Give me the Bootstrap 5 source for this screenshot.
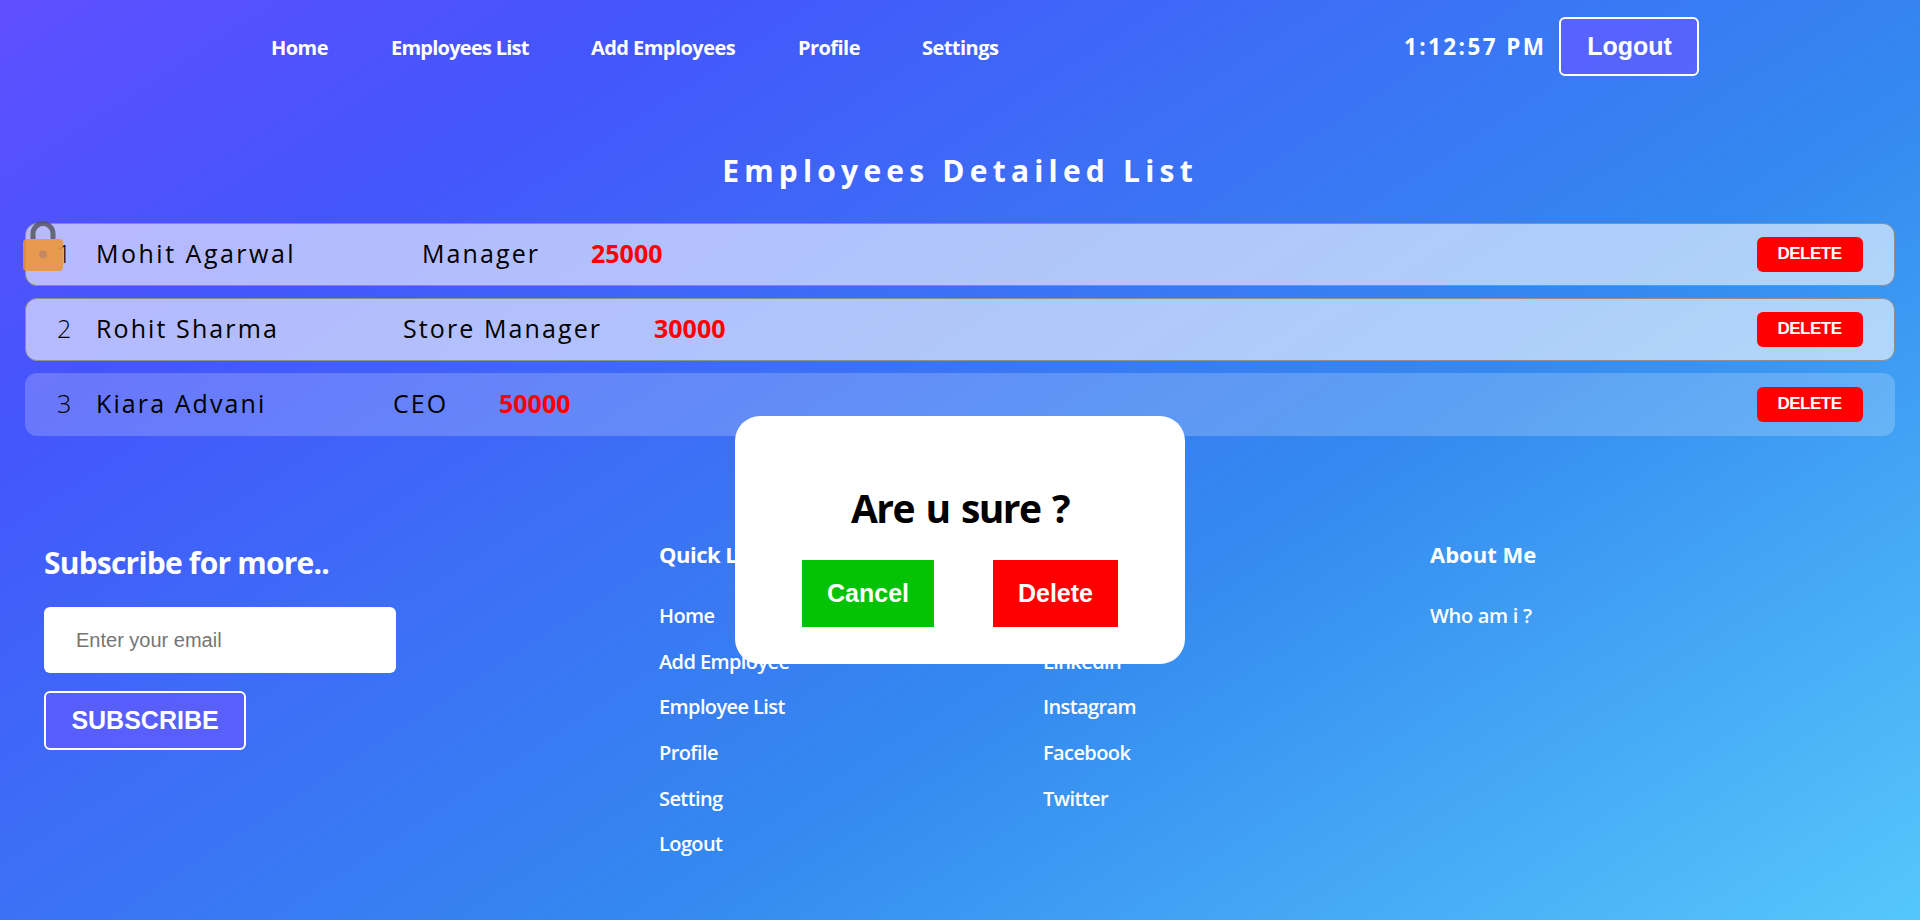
<!DOCTYPE html>
<html lang="en">
<head>
<meta charset="utf-8">
<title>Employees</title>
<link href="https://cdn.jsdelivr.net/npm/bootstrap@5.3.0/dist/css/bootstrap.min.css" rel="stylesheet">
<style>
body{height:920px;overflow:hidden;font-family:"Open Sans","Noto Sans",sans-serif;color:#fff;background:linear-gradient(147deg,#5f4fff 0%,#4455fc 20%,#3489f0 62%,#55c7fb 100%)}
.topbar{height:95px;padding:17px 221px 0 271px}
.topbar .nav-link{padding:0;color:#fff;font-size:20px;font-weight:700;line-height:30px;letter-spacing:-.55px;white-space:nowrap;margin-top:16px}
.topbar .m2{letter-spacing:-.75px}
.m1{width:120px}.m2{width:200px}.m3{width:207px}.m4{width:124px}
.clock{font-size:22.5px;font-weight:700;letter-spacing:2.4px;line-height:30px;margin-top:15px;width:155px;white-space:nowrap}
.btn-main{width:140px;height:59px;border:2px solid #fff;border-radius:6px;background:rgba(100,90,255,.7);color:#fff;font:700 25px/1 "Liberation Sans",sans-serif;padding:0}
.topbar .btn-main{padding-left:1px}
.page-title{font-size:30px;font-weight:700;line-height:40px;letter-spacing:5.2px;margin:56px 0 32px;text-align:center}
.emp-list{padding:0 25px;gap:12px}
.emp{height:63px;border-radius:12px;background:rgba(255,255,255,.6);border:1px solid #8f8f93;padding:0 31px 0 31px;color:#000;font-size:25px;white-space:nowrap}
.emp span{position:relative;top:-1px}
.emp.soft{background:rgba(255,255,255,.2);border-color:transparent}
.num{width:39px;font-weight:300}
.nm,.job{letter-spacing:2.1px}
.nm,.job{font-weight:500}
.emp:first-child .nm{letter-spacing:2.5px}
.pay{font-weight:700;color:#f00;padding-left:1px}
.btn-del{width:106px;height:35px;border:0;border-radius:6px;background:#f00;color:#fff;font:700 17px/1 "Liberation Sans",sans-serif;letter-spacing:-.5px;padding:0 1px 2px 0;margin-top:-1px}
.lock{position:absolute;left:23px;top:220px;opacity:.85}
.foot{padding:104px 0 0 44px}
.c1{width:615px}.c2{width:384px}.c3{width:387px}
.sub-title{font-size:30px;font-weight:700;line-height:40px;letter-spacing:-.8px;margin:3px 0 24px}
.mail{width:352px;height:66px;border:0;border-radius:6px;padding:0 32px;font:20px "Liberation Sans",sans-serif;margin-bottom:18px}
.mail::placeholder{color:#757575;opacity:1}
.foot h5{font-size:22px;font-weight:700;line-height:30px;margin:-1px 0 33px;letter-spacing:-.5px}
.foot .about h5{letter-spacing:0}
.foot li{font-size:20px;font-weight:600;line-height:28px;height:45.7px;letter-spacing:-.6px}
.foot .about li{letter-spacing:-.3px}
.social{padding-top:107.7px}
.ask{position:absolute;left:735px;top:416px;width:450px;height:248px;border-radius:25px;background:#fff;color:#000;padding-top:65px}
.ask h2{font-size:39px;font-weight:700;line-height:54px;margin:0 0 25px;text-align:center;letter-spacing:-1.6px;word-spacing:3px}
.ask button{height:67px;border:0;color:#fff;font:700 25px "Liberation Sans",sans-serif}
.choices{padding:0 67px}
.no{width:132px;background:#04c204}.yes{width:125px;background:#f00}
</style>
</head>
<body>
<nav class="topbar d-flex">
<a class="nav-link m1" href="#">Home</a><a class="nav-link m2" href="#">Employees List</a><a class="nav-link m3" href="#">Add Employees</a><a class="nav-link m4" href="#">Profile</a><a class="nav-link" href="#">Settings</a>
<div class="clock ms-auto">1:12:57 PM</div><button class="btn-main">Logout</button>
</nav>
<h1 class="page-title">Employees Detailed List</h1>
<main class="emp-list d-flex flex-column">
<div class="emp d-flex align-items-center"><span class="num">1</span><span class="nm" style="width:326px">Mohit Agarwal</span><span class="job" style="width:168px">Manager</span><span class="pay">25000</span><button class="btn-del ms-auto">DELETE</button></div>
<div class="emp d-flex align-items-center"><span class="num">2</span><span class="nm" style="width:307px">Rohit Sharma</span><span class="job" style="width:250px">Store Manager</span><span class="pay">30000</span><button class="btn-del ms-auto">DELETE</button></div>
<div class="emp soft d-flex align-items-center"><span class="num">3</span><span class="nm" style="width:297px">Kiara Advani</span><span class="job" style="width:105px">CEO</span><span class="pay">50000</span><button class="btn-del ms-auto">DELETE</button></div>
</main>
<svg class="lock" width="42" height="52" viewBox="0 0 42 52"><path d="M10 19V13.500a10 10 0 0 1 20 0V19" fill="none" stroke="#575766" stroke-width="5"/><rect x="0" y="19" width="40" height="32" rx="4" fill="#ef9431"/><circle cx="20" cy="34.500" r="4" fill="#c97f47"/></svg>
<footer class="foot d-flex">
<div class="c1"><h3 class="sub-title">Subscribe for more..</h3><input class="mail d-block" placeholder="Enter your email"><button class="btn-main" style="width:202px">SUBSCRIBE</button></div>
<div class="c2"><h5>Quick Links</h5><ul class="list-unstyled"><li>Home</li><li>Add Employee</li><li>Employee List</li><li>Profile</li><li>Setting</li><li>Logout</li></ul></div>
<div class="c3"><ul class="list-unstyled social"><li>Linkedin</li><li>Instagram</li><li>Facebook</li><li>Twitter</li></ul></div>
<div class="about"><h5>About Me</h5><ul class="list-unstyled"><li>Who am i ?</li></ul></div>
</footer>
<div class="ask"><h2>Are u sure ?</h2><div class="choices d-flex justify-content-between"><button class="no">Cancel</button><button class="yes">Delete</button></div></div>
<script src="https://cdn.jsdelivr.net/npm/bootstrap@5.3.0/dist/js/bootstrap.bundle.min.js"></script>
</body>
</html>
